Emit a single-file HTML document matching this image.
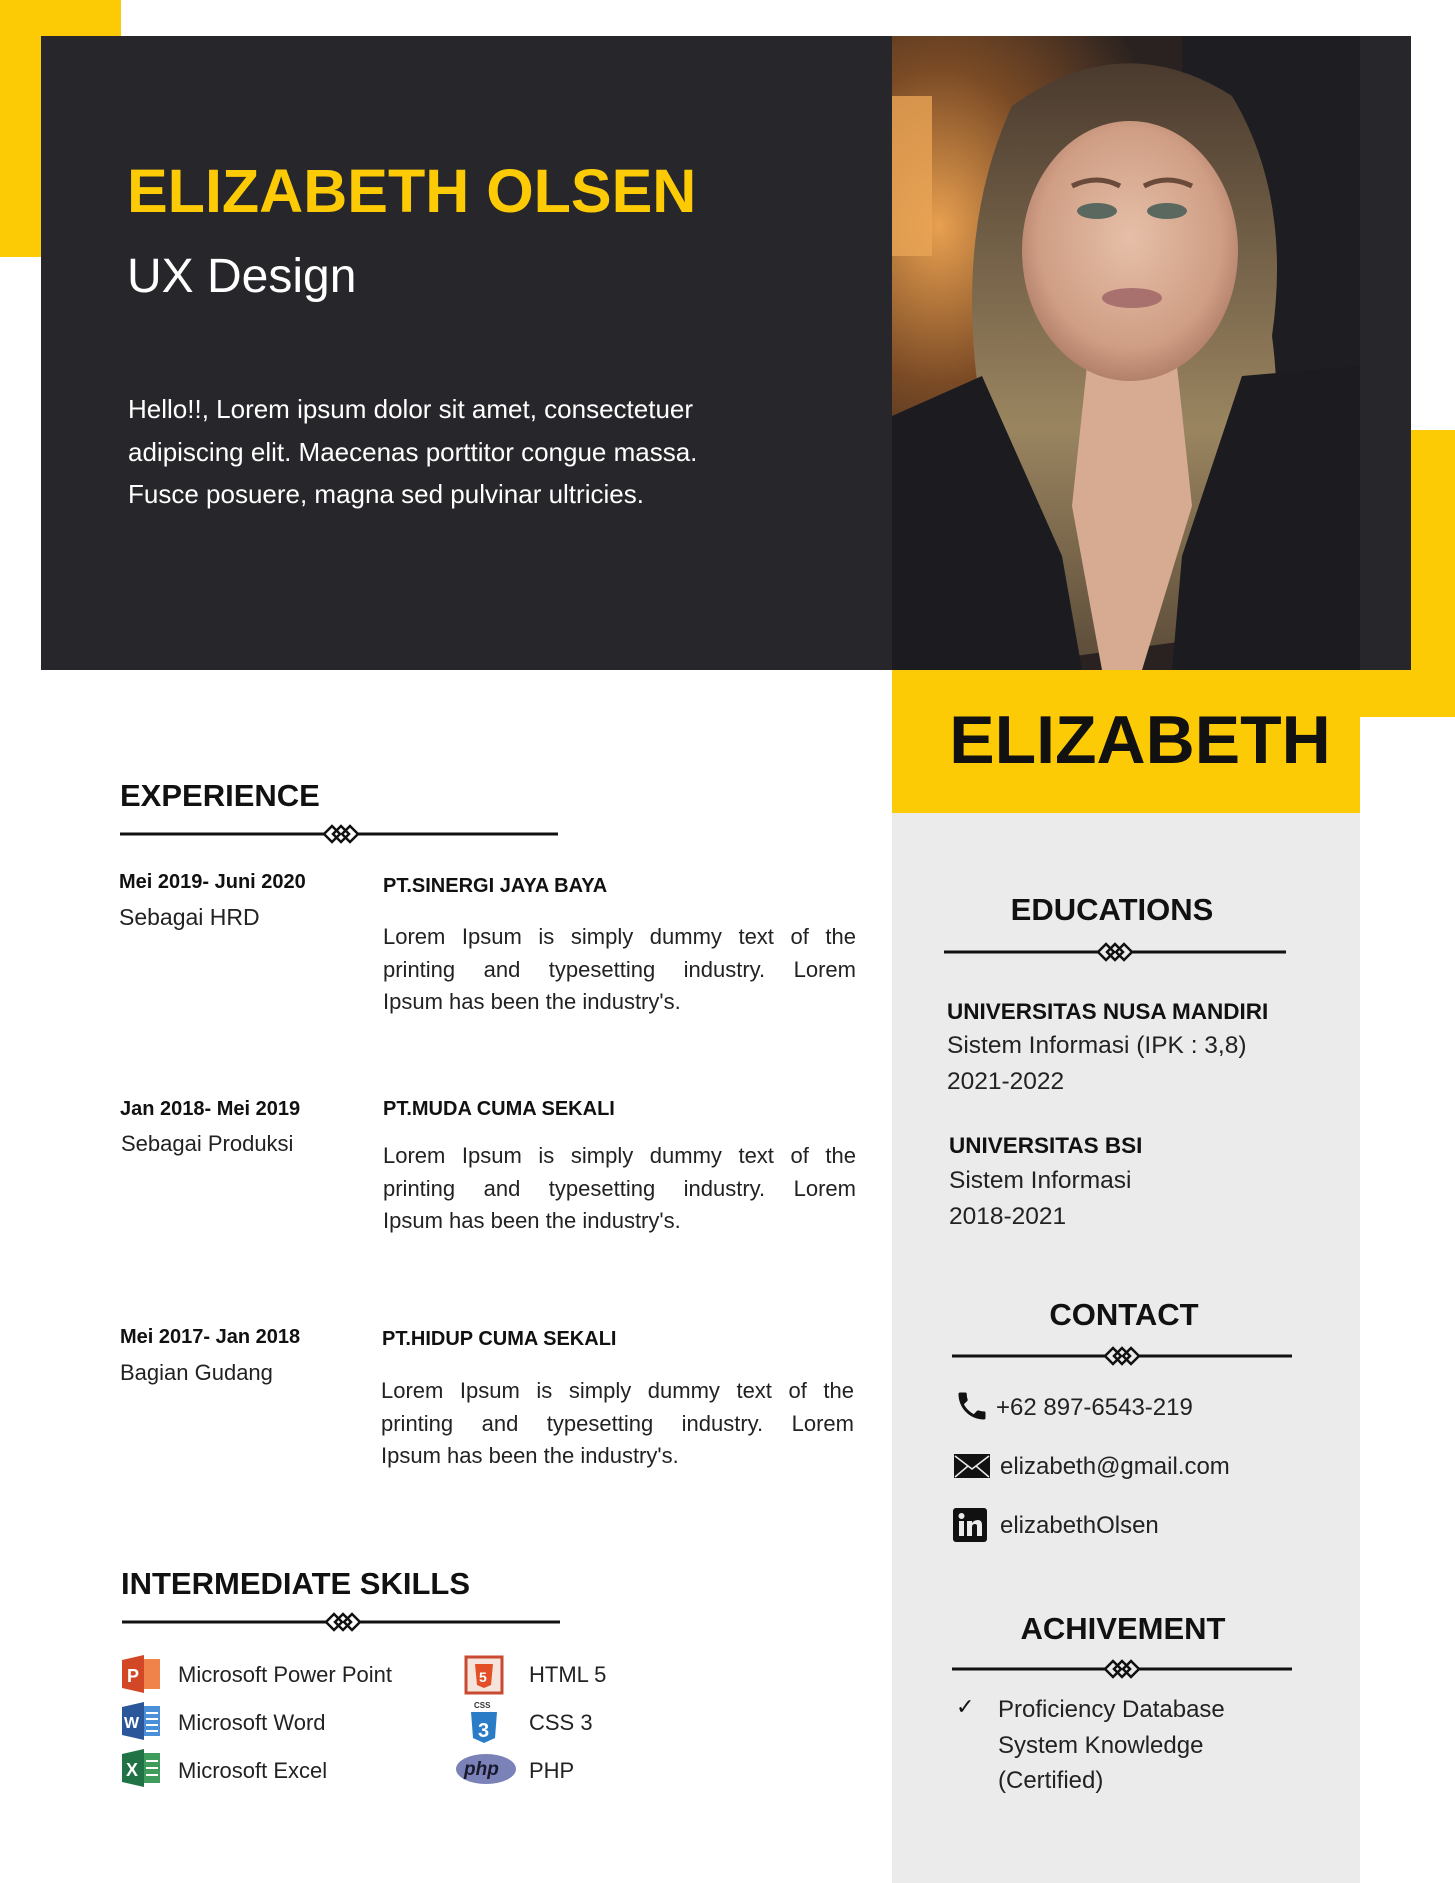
<!DOCTYPE html>
<html><head><meta charset="utf-8"><style>
*{margin:0;padding:0;box-sizing:border-box}
body{width:1455px;height:1883px;position:relative;background:#fff;font-family:"Liberation Sans",Arial,sans-serif;color:#111;overflow:hidden}
.a{position:absolute;white-space:nowrap}
.h{font-weight:bold;font-size:31px;line-height:40px;color:#111}
.dt{font-weight:bold;font-size:20px;line-height:28px}
.rl{font-size:23px;line-height:30px;color:#222}
.co{font-weight:bold;font-size:20px;line-height:28px}
.bd{font-size:22px;line-height:32.5px;white-space:normal;width:473px;color:#222}
.bd span{display:block;text-align:justify;text-align-last:justify}
.bd span:last-child{text-align-last:left}
.sk{font-size:22px;line-height:30px;color:#222}
.ed{font-size:24.5px;line-height:30px;color:#222}
.eb{font-weight:bold;font-size:22.5px;line-height:30px}
</style></head><body>
<div class="a" style="left:0;top:0;width:121px;height:257px;background:#fdcb05"></div>
<div class="a" style="left:1360px;top:430px;width:95px;height:287px;background:#fdcb05"></div>
<div class="a" style="left:41px;top:36px;width:1370px;height:634px;background:#27272b"></div>
<svg class="a" style="left:892px;top:36px" width="468" height="634" viewBox="0 0 468 634">
<defs>
<radialGradient id="lamp" cx="0.1" cy="0.3" r="0.5"><stop offset="0" stop-color="#e8a050"/><stop offset="0.5" stop-color="#7a4a25"/><stop offset="1" stop-color="#2a2220"/></radialGradient>
<radialGradient id="face" cx="0.5" cy="0.45" r="0.6"><stop offset="0" stop-color="#e6bfa8"/><stop offset="0.7" stop-color="#cf9e84"/><stop offset="1" stop-color="#a87460"/></radialGradient>
<linearGradient id="hair" x1="0" y1="0" x2="0" y2="1"><stop offset="0" stop-color="#4a3a2e"/><stop offset="0.6" stop-color="#9a8560"/><stop offset="1" stop-color="#5a4a38"/></linearGradient>
</defs>
<rect width="468" height="634" fill="url(#lamp)"/>
<rect x="290" y="0" width="178" height="634" fill="#1e1e22"/>
<rect x="0" y="60" width="40" height="160" fill="#e9a455" opacity="0.8"/>
<path d="M120 70 Q230 -10 340 60 Q400 160 380 300 Q400 450 330 600 L80 634 Q40 500 90 380 Q60 200 120 70Z" fill="url(#hair)"/>
<path d="M0 380 L90 340 L170 520 L190 634 L0 634Z" fill="#1c1b20"/>
<path d="M468 330 L350 340 L290 520 L280 634 L468 634Z" fill="#1c1b20"/>
<path d="M195 330 L285 330 L300 470 L250 634 L210 634 L180 470Z" fill="#d7ab92"/>
<ellipse cx="238" cy="215" rx="108" ry="130" fill="url(#face)"/>
<ellipse cx="205" cy="175" rx="20" ry="8" fill="#5a6860"/>
<ellipse cx="275" cy="175" rx="20" ry="8" fill="#5a6860"/>
<path d="M180 150 Q205 138 228 150" stroke="#6a4a3a" stroke-width="5" fill="none"/>
<path d="M252 150 Q275 138 300 150" stroke="#6a4a3a" stroke-width="5" fill="none"/>
<ellipse cx="240" cy="262" rx="30" ry="10" fill="#a9716e"/>
</svg>
<div class="a" style="left:1360px;top:36px;width:51px;height:634px;background:#27272b"></div>
<div class="a" style="left:892px;top:670px;width:468px;height:143px;background:#fdcb05"></div>
<div class="a" style="left:892px;top:813px;width:468px;height:1070px;background:#ebebeb"></div>
<div class="a" style="left:906px;top:695px;width:468px;text-align:center;font-weight:bold;font-size:68px;line-height:90px;color:#111">ELIZABETH</div>

<div class="a" style="left:127px;top:153px;font-weight:bold;font-size:61px;line-height:76px;color:#fdcb05">ELIZABETH OLSEN</div>
<div class="a" style="left:127px;top:248px;font-size:48px;line-height:58px;color:#fff">UX Design</div>
<div class="a" style="left:128px;top:388px;font-size:26px;line-height:42.5px;color:#fff">Hello!!, Lorem ipsum dolor sit amet, consectetuer<br>adipiscing elit. Maecenas porttitor congue massa.<br>Fusce posuere, magna sed pulvinar ultricies.</div>

<div class="a h" style="left:120px;top:776px">EXPERIENCE</div>
<svg class="a" style="left:120px;top:822px" width="438" height="24"><line x1="0" y1="12" x2="438" y2="12" stroke="#111" stroke-width="3"/><rect x="205" y="2" width="32" height="20" fill="#fff"/><g fill="none" stroke="#111" stroke-width="2.5"><path d="M204 12 L212 4 L220 12 L212 20Z"/><path d="M213 12 L221 4 L229 12 L221 20Z"/><path d="M222 12 L230 4 L238 12 L230 20Z"/></g></svg>

<div class="a dt" style="left:119px;top:868px">Mei 2019- Juni 2020</div>
<div class="a rl" style="left:119px;top:902px">Sebagai HRD</div>
<div class="a co" style="left:383px;top:872px">PT.SINERGI JAYA BAYA</div>
<div class="a bd" style="left:383px;top:921px"><span>Lorem Ipsum is simply dummy text of the</span><span>printing and typesetting industry. Lorem</span><span>Ipsum has been the industry's.</span></div>

<div class="a dt" style="left:120px;top:1095px">Jan 2018- Mei 2019</div>
<div class="a rl" style="left:121px;top:1129px;font-size:22px">Sebagai Produksi</div>
<div class="a co" style="left:383px;top:1095px">PT.MUDA CUMA SEKALI</div>
<div class="a bd" style="left:383px;top:1140px"><span>Lorem Ipsum is simply dummy text of the</span><span>printing and typesetting industry. Lorem</span><span>Ipsum has been the industry's.</span></div>

<div class="a dt" style="left:120px;top:1323px">Mei 2017- Jan 2018</div>
<div class="a rl" style="left:120px;top:1358px;font-size:22px">Bagian Gudang</div>
<div class="a co" style="left:382px;top:1325px">PT.HIDUP CUMA SEKALI</div>
<div class="a bd" style="left:381px;top:1375px"><span>Lorem Ipsum is simply dummy text of the</span><span>printing and typesetting industry. Lorem</span><span>Ipsum has been the industry's.</span></div>

<div class="a h" style="left:121px;top:1564px">INTERMEDIATE SKILLS</div>
<svg class="a" style="left:122px;top:1610px" width="438" height="24"><line x1="0" y1="12" x2="438" y2="12" stroke="#111" stroke-width="3"/><rect x="205" y="2" width="32" height="20" fill="#fff"/><g fill="none" stroke="#111" stroke-width="2.5"><path d="M204 12 L212 4 L220 12 L212 20Z"/><path d="M213 12 L221 4 L229 12 L221 20Z"/><path d="M222 12 L230 4 L238 12 L230 20Z"/></g></svg>

<svg class="a" style="left:122px;top:1655px" width="40" height="38"><rect x="14" y="4" width="24" height="30" fill="#f0834a"/><path d="M0 5 L22 0 L22 38 L0 33Z" fill="#d24726"/><text x="5" y="27" font-family="Liberation Sans" font-weight="bold" font-size="18" fill="#fff">P</text></svg>
<div class="a sk" style="left:178px;top:1660px">Microsoft Power Point</div>
<svg class="a" style="left:122px;top:1702px" width="40" height="38"><rect x="14" y="4" width="24" height="30" fill="#4a8fd8"/><g stroke="#fff" stroke-width="2"><line x1="24" y1="11" x2="36" y2="11"/><line x1="24" y1="17" x2="36" y2="17"/><line x1="24" y1="23" x2="36" y2="23"/><line x1="24" y1="29" x2="36" y2="29"/></g><path d="M0 5 L22 0 L22 38 L0 33Z" fill="#2b579a"/><text x="2" y="26" font-family="Liberation Sans" font-weight="bold" font-size="16" fill="#fff">W</text></svg>
<div class="a sk" style="left:178px;top:1708px">Microsoft Word</div>
<svg class="a" style="left:122px;top:1749px" width="40" height="38"><rect x="14" y="4" width="24" height="30" fill="#3f9c5c"/><g stroke="#fff" stroke-width="2"><line x1="24" y1="12" x2="36" y2="12"/><line x1="24" y1="19" x2="36" y2="19"/><line x1="24" y1="26" x2="36" y2="26"/></g><path d="M0 5 L22 0 L22 38 L0 33Z" fill="#217346"/><text x="4" y="27" font-family="Liberation Sans" font-weight="bold" font-size="18" fill="#fff">X</text></svg>
<div class="a sk" style="left:178px;top:1756px">Microsoft Excel</div>

<svg class="a" style="left:464px;top:1655px" width="40" height="40"><rect x="2" y="2" width="36" height="36" fill="#f4e4dc" stroke="#c84a30" stroke-width="3"/><path d="M11 9 L29 9 L27 30 L20 33 L13 30Z" fill="#e34f26"/><text x="15" y="27" font-family="Liberation Sans" font-weight="bold" font-size="14" fill="#fff">5</text></svg>
<div class="a sk" style="left:529px;top:1660px">HTML 5</div>
<svg class="a" style="left:464px;top:1700px" width="40" height="44"><text x="10" y="8" font-family="Liberation Sans" font-weight="bold" font-size="8" fill="#333">CSS</text><path d="M7 12 L33 12 L31 38 L20 43 L9 38Z" fill="#2a7cc7"/><text x="14" y="37" font-family="Liberation Sans" font-weight="bold" font-size="20" fill="#fff">3</text></svg>
<div class="a sk" style="left:529px;top:1708px">CSS 3</div>
<svg class="a" style="left:454px;top:1752px" width="64" height="34"><ellipse cx="32" cy="17" rx="30" ry="15" fill="#7b82b8"/><text x="10" y="23" font-family="Liberation Sans" font-style="italic" font-weight="bold" font-size="19" fill="#1a1a2e">php</text></svg>
<div class="a sk" style="left:529px;top:1756px">PHP</div>

<div class="a h" style="left:892px;top:890px;width:440px;text-align:center">EDUCATIONS</div>
<svg class="a" style="left:944px;top:940px" width="342" height="24"><line x1="0" y1="12" x2="342" y2="12" stroke="#111" stroke-width="3"/><rect x="155" y="2" width="32" height="20" fill="#ebebeb"/><g fill="none" stroke="#111" stroke-width="2.5"><path d="M154 12 L162 4 L170 12 L162 20Z"/><path d="M163 12 L171 4 L179 12 L171 20Z"/><path d="M172 12 L180 4 L188 12 L180 20Z"/></g></svg>
<div class="a eb" style="left:947px;top:997px">UNIVERSITAS NUSA MANDIRI</div>
<div class="a ed" style="left:947px;top:1031px">Sistem Informasi (IPK : 3,8)</div>
<div class="a ed" style="left:947px;top:1067px">2021-2022</div>
<div class="a eb" style="left:949px;top:1131px">UNIVERSITAS BSI</div>
<div class="a ed" style="left:949px;top:1166px">Sistem Informasi</div>
<div class="a ed" style="left:949px;top:1202px">2018-2021</div>

<div class="a h" style="left:904px;top:1295px;width:440px;text-align:center">CONTACT</div>
<svg class="a" style="left:952px;top:1344px" width="340" height="24"><line x1="0" y1="12" x2="340" y2="12" stroke="#111" stroke-width="3"/><rect x="154" y="2" width="32" height="20" fill="#ebebeb"/><g fill="none" stroke="#111" stroke-width="2.5"><path d="M153 12 L161 4 L169 12 L161 20Z"/><path d="M162 12 L170 4 L178 12 L170 20Z"/><path d="M171 12 L179 4 L187 12 L179 20Z"/></g></svg>
<svg class="a" style="left:954px;top:1387px" width="36" height="38" viewBox="0 0 24 24"><path d="M6.6 10.8c1.4 2.8 3.8 5.1 6.6 6.6l2.2-2.2c.3-.3.7-.4 1-.2 1.1.4 2.3.6 3.6.6.6 0 1 .4 1 1V20c0 .6-.4 1-1 1C10.6 21 3 13.4 3 4c0-.6.4-1 1-1h3.5c.6 0 1 .4 1 1 0 1.3.2 2.5.6 3.6.1.3 0 .7-.2 1L6.6 10.8z" fill="#111"/></svg>
<div class="a" style="left:996px;top:1393px;font-size:24px;line-height:30px;color:#222">+62 897-6543-219</div>
<svg class="a" style="left:953px;top:1453px" width="38" height="26"><rect x="1" y="1" width="36" height="24" fill="#111"/><path d="M2 3 L19 16 L36 3 M2 24 L15 13 M36 24 L23 13" stroke="#ebebeb" stroke-width="1.5" fill="none"/></svg>
<div class="a" style="left:1000px;top:1452px;font-size:24px;line-height:30px;color:#222">elizabeth@gmail.com</div>
<svg class="a" style="left:953px;top:1508px" width="34" height="34"><rect width="34" height="34" rx="3" fill="#111"/><rect x="6" y="13" width="5" height="15" fill="#ebebeb"/><circle cx="8.5" cy="8" r="3" fill="#ebebeb"/><path d="M14 13 h5 v2 q2-3 6-3 q4 0 4 5 v11 h-5 v-10 q0-2-2-2 q-3 0-3 3 v9 h-5Z" fill="#ebebeb"/></svg>
<div class="a" style="left:1000px;top:1511px;font-size:24px;line-height:30px;color:#222">elizabethOlsen</div>

<div class="a h" style="left:903px;top:1609px;width:440px;text-align:center">ACHIVEMENT</div>
<svg class="a" style="left:952px;top:1657px" width="340" height="24"><line x1="0" y1="12" x2="340" y2="12" stroke="#111" stroke-width="3"/><rect x="154" y="2" width="32" height="20" fill="#ebebeb"/><g fill="none" stroke="#111" stroke-width="2.5"><path d="M153 12 L161 4 L169 12 L161 20Z"/><path d="M162 12 L170 4 L178 12 L170 20Z"/><path d="M171 12 L179 4 L187 12 L179 20Z"/></g></svg>
<div class="a" style="left:956px;top:1692px;font-size:22px;line-height:30px">✓</div>
<div class="a" style="left:998px;top:1692px;font-size:24px;line-height:35.5px;color:#222;white-space:normal;width:300px">Proficiency Database<br>System Knowledge<br>(Certified)</div>
</body></html>
